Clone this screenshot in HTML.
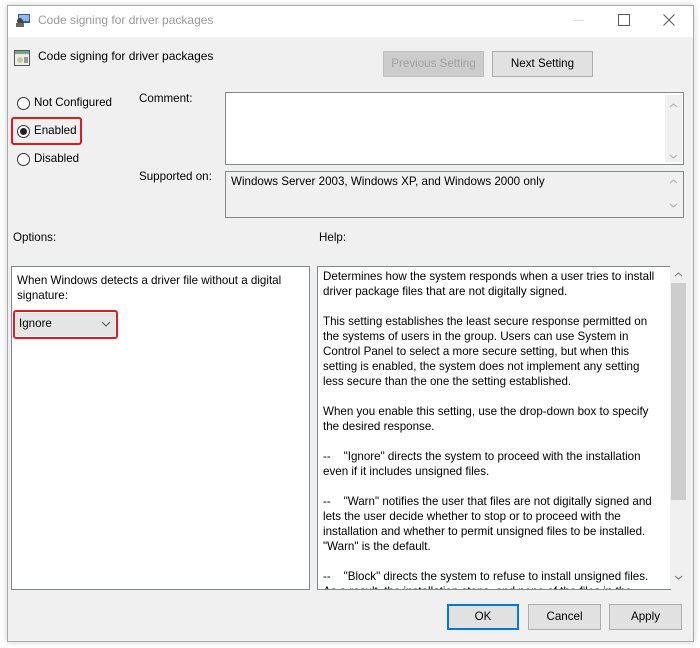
<!DOCTYPE html><html><head><style>
body{margin:0;width:700px;height:648px;background:#fff;font-family:"Liberation Sans",sans-serif;font-size:11.6px;color:#000;position:relative;overflow:hidden}
.a{position:absolute;white-space:nowrap}
.win{position:absolute;left:7px;top:5px;width:685px;height:635px;background:#f0f0f0;border:1px solid #aaa;box-shadow:0 0 6px rgba(0,0,0,.2)}
.btn{position:absolute;background:#e1e1e1;border:1px solid #adadad;text-align:center;box-sizing:border-box}
.radio{position:absolute;width:11px;height:11px;border:1px solid #333;border-radius:50%;background:#fff}
.red{position:absolute;border:2px solid #e5191c;border-radius:3px}
.box{position:absolute;border:1px solid #828790;background:#fff}
.sb{position:absolute;background:#f0f0f0}
</style></head><body>
<div class="win">
<div class="a" style="left:0;top:0;width:685px;height:31px;background:#fff"></div>
</div>
<svg class="a" style="left:15px;top:13px" width="16" height="14"><rect x="3" y="1" width="12" height="9" fill="#2d5fa8"/><rect x="4" y="2" width="10" height="6" fill="#8fb8e8"/><circle cx="5" cy="8" r="3" fill="#444"/><rect x="1" y="10" width="8" height="4" fill="#666"/></svg>
<div class="a" style="left:38px;top:13px;color:#999;font-size:12px">Code signing for driver packages</div>
<div class="a" style="left:573px;top:20px;width:11px;height:1px;background:#ddd"></div>
<div class="a" style="left:618px;top:14px;width:10px;height:10px;border:1px solid #555"></div>
<svg class="a" style="left:663px;top:14px" width="12" height="12"><path d="M0.5 0.5L11.5 11.5M11.5 0.5L0.5 11.5" stroke="#555" stroke-width="1"/></svg>
<svg class="a" style="left:14px;top:50px" width="16" height="16"><rect x="0.5" y="0.5" width="15" height="15" fill="#eee" stroke="#555"/><rect x="1" y="1" width="14" height="3" fill="#6a8"/><circle cx="6" cy="10" r="3" fill="#cc9"/><rect x="10" y="7" width="4" height="6" fill="#999"/></svg>
<div class="a" style="left:38px;top:49px;font-size:12px">Code signing for driver packages</div>
<div class="btn" style="left:383px;top:51px;width:101px;height:26px;background:#ccc;border-color:#bfbfbf;color:#a0a0a0;line-height:24px">Previous Setting</div>
<div class="btn" style="left:492px;top:51px;width:101px;height:26px;line-height:24px">Next Setting</div>
<div class="radio" style="left:17px;top:97px"></div><div class="a" style="left:34px;top:96px">Not Configured</div>
<div class="radio" style="left:17px;top:125px"></div><div class="a" style="left:20px;top:128px;width:7px;height:7px;border-radius:50%;background:#222"></div><div class="a" style="left:34px;top:124px">Enabled</div>
<div class="red" style="left:11px;top:117px;width:67px;height:24px"></div>
<div class="radio" style="left:17px;top:153px"></div><div class="a" style="left:34px;top:152px">Disabled</div>
<div class="a" style="left:139px;top:92px">Comment:</div>
<div class="a" style="left:139px;top:170px">Supported on:</div>
<div class="box" style="left:225px;top:92px;width:457px;height:71px"></div>
<div class="sb" style="left:665px;top:95px;width:17px;height:67px"></div>
<svg class="a" style="left:669px;top:102px" width="9" height="60"><path d="M1 5L4.5 2L8 5M1 53L4.5 56L8 53" fill="none" stroke="#aaa"/></svg>
<div class="box" style="left:225px;top:171px;width:457px;height:45px;background:#f0f0f0"></div>
<div class="a" style="left:231px;top:175px">Windows Server 2003, Windows XP, and Windows 2000 only</div>
<svg class="a" style="left:669px;top:178px" width="9" height="34"><path d="M1 5L4.5 2L8 5M1 26L4.5 29L8 26" fill="none" stroke="#aaa"/></svg>
<div class="a" style="left:13px;top:231px">Options:</div>
<div class="a" style="left:319px;top:231px">Help:</div>
<div class="box" style="left:11px;top:266px;width:297px;height:322px"></div>
<div class="a" style="left:17px;top:274px">When Windows detects a driver file without a digital</div>
<div class="a" style="left:17px;top:289px">signature:</div>
<div class="a" style="left:16px;top:313px;width:99px;height:23px;background:#e5e5e5"></div>
<div class="a" style="left:19px;top:317px">Ignore</div>
<svg class="a" style="left:101px;top:321px" width="10" height="6"><path d="M1 1L5 5L9 1" fill="none" stroke="#555"/></svg>
<div class="red" style="left:13px;top:310px;width:101px;height:25px"></div>
<div class="box" style="left:317px;top:266px;width:352px;height:322px;overflow:hidden">
<div class="a" style="left:5px;top:2px;line-height:15px">Determines how the system responds when a user tries to install<br>driver package files that are not digitally signed.<br><br>This setting establishes the least secure response permitted on<br>the systems of users in the group. Users can use System in<br>Control Panel to select a more secure setting, but when this<br>setting is enabled, the system does not implement any setting<br>less secure than the one the setting established.<br><br>When you enable this setting, use the drop-down box to specify<br>the desired response.<br><br>--&nbsp;&nbsp;&nbsp; "Ignore" directs the system to proceed with the installation<br>even if it includes unsigned files.<br><br>--&nbsp;&nbsp;&nbsp; "Warn" notifies the user that files are not digitally signed and<br>lets the user decide whether to stop or to proceed with the<br>installation and whether to permit unsigned files to be installed.<br>"Warn" is the default.<br><br>--&nbsp;&nbsp;&nbsp; "Block" directs the system to refuse to install unsigned files.<br>As a result, the installation stops, and none of the files in the</div>
</div>
<div class="sb" style="left:670px;top:266px;width:17px;height:323px"></div>
<div class="a" style="left:671px;top:283px;width:15px;height:217px;background:#cdcdcd"></div>
<svg class="a" style="left:674px;top:271px" width="9" height="312"><path d="M1 5L4.5 2L8 5M1 305L4.5 308L8 305" fill="none" stroke="#777"/></svg>
<div class="btn" style="left:447px;top:604px;width:72px;height:26px;border:2px solid #0078d7;line-height:22px">OK</div>
<div class="btn" style="left:528px;top:604px;width:73px;height:26px;line-height:24px">Cancel</div>
<div class="btn" style="left:609px;top:604px;width:73px;height:26px;line-height:24px">Apply</div>
</body></html>
